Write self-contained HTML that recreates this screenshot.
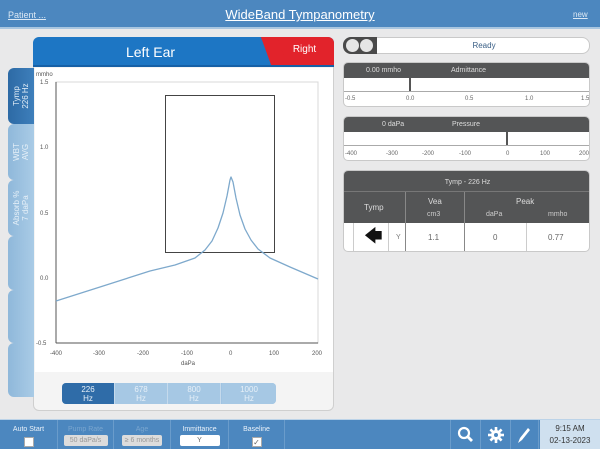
<!DOCTYPE html>
<html><head><meta charset="utf-8"><style>
*{margin:0;padding:0;box-sizing:border-box}
body{width:600px;height:449px;overflow:hidden;background:#e9e9ea;font-family:"Liberation Sans",sans-serif;position:relative}
.a{position:absolute}
.hdr{left:0;top:0;width:600px;height:29px;background:#4c87bf;border-bottom:2px solid #a9c6e0}
.tab{left:8px;width:26px;border-radius:6px 0 0 6px;background:linear-gradient(90deg,#8fb8da,#a9cbe6);color:#e6f0f8;font-size:8px}
.tab span{position:absolute;left:50%;top:50%;transform:translate(-50%,-50%) rotate(-90deg);white-space:nowrap;text-align:center;line-height:9px}
.box{background:#fff;border:1px solid #c9c9c9;border-radius:5px}
.dk{background:#545556;color:#ddd;font-size:7px}
.sm{font-size:6px;color:#666}
.fb{top:383px;height:21px;width:53px;color:#e7f0f8;font-size:8px;text-align:center;line-height:9px;padding-top:2px;border-right:1px solid #c5daec}
.bb{top:420px;height:29px;border-right:1px solid #6a9ccb;color:#eaf2fa;font-size:7px;text-align:center}
.btn{background:#dcdcdc;border-radius:2px;color:#999;font-size:7px;height:11px;line-height:11px;margin:6px auto 0}
</style></head><body>
<div class="a hdr"></div>
<div class="a" style="left:8px;top:10px;color:#dbe8f4;font-size:9px;text-decoration:underline">Patient ...</div>
<div class="a" style="left:0;width:600px;top:7px;text-align:center;color:#fff;font-size:13px;text-decoration:underline">WideBand Tympanometry</div>
<div class="a" style="left:573px;top:10px;color:#dbe8f4;font-size:8px;text-decoration:underline">new</div>

<div class="a" style="left:33px;top:37px;width:301px;height:374px;background:#f4f4f4;border:1px solid #cfcfcf;border-radius:6px"></div>
<div class="a" style="left:33px;top:37px;width:301px;height:30px;background:#1d76c4;border-radius:6px 6px 0 0;border-bottom:2px solid #1660a6"></div>
<div class="a" style="left:33px;top:44px;width:235px;text-align:center;color:#fff;font-size:14px">Left Ear</div>
<div class="a" style="left:274px;top:37px;width:60px;height:28px;background:#e2232b;border-radius:0 6px 0 0"></div>
<div class="a" style="left:266px;top:37px;width:16px;height:28px;background:#e2232b;transform:skewX(20deg)"></div>
<div class="a" style="left:282px;top:44px;width:45px;text-align:center;color:#fff;font-size:10px">Right</div>

<div class="a tab" style="top:68px;height:56px;background:linear-gradient(90deg,#2d6aa5,#3e7fbb)"><span>Tymp<br>226 Hz</span></div>
<div class="a tab" style="top:124px;height:56px"><span>WBT<br>AVG</span></div>
<div class="a tab" style="top:180px;height:56px"><span>Absorb %<br>7 daPa</span></div>
<div class="a tab" style="top:236px;height:54px"></div>
<div class="a tab" style="top:290px;height:53px"></div>
<div class="a tab" style="top:343px;height:54px"></div>

<svg class="a" style="left:0;top:0" width="600" height="449">
<rect x="35" y="68" width="298" height="304" fill="#fff"/>
<g font-family="Liberation Sans" font-size="6" fill="#555">
<text x="36" y="76">mmho</text>
<text x="40" y="84">1.5</text><text x="40" y="149">1.0</text><text x="40" y="215">0.5</text><text x="40" y="280">0.0</text><text x="36" y="345">-0.5</text>
<text x="50" y="355">-400</text><text x="93" y="355">-300</text><text x="137" y="355">-200</text><text x="181" y="355">-100</text><text x="229" y="355">0</text><text x="269" y="355">100</text><text x="312" y="355">200</text>
<text x="181" y="365">daPa</text>
</g>
<rect x="56" y="82" width="262" height="261" fill="none" stroke="#d8d8d8" stroke-width="1"/>
<line x1="56" y1="82" x2="56" y2="343" stroke="#555"/>
<line x1="56" y1="343" x2="318" y2="343" stroke="#555"/>
<rect x="165.5" y="95.5" width="109" height="157" fill="none" stroke="#444" stroke-width="1"/>
<path d="M56 301 L100 287 L150 271 L175 265 L195 258 L205 250 L212 241 L218 228 L223 213 L227 196 L230 180 L231 177 L233 182 L236 198 L240 215 L245 229 L251 240 L258 249 L270 258 L290 267 L318 279" fill="none" stroke="#7ea9cc" stroke-width="1.3" stroke-linejoin="round"/>
</svg>

<div class="a" style="left:62px;top:383px;width:214px;height:21px;border-radius:4px;overflow:hidden;background:#9fc3e2"></div>
<div class="a fb" style="left:62px;background:#2f6ca8;border-radius:4px 0 0 4px">226<br>Hz</div>
<div class="a fb" style="left:115px;background:#a6c8e4">678<br>Hz</div>
<div class="a fb" style="left:168px;background:#a6c8e4">800<br>Hz</div>
<div class="a fb" style="left:222px;width:54px;background:#a6c8e4;border:0;border-radius:0 4px 4px 0">1000<br>Hz</div>

<div class="a box" style="left:343px;top:37px;width:247px;height:17px;border-radius:8px"></div>
<div class="a" style="left:343px;top:37px;width:34px;height:17px;background:#4a4a4a;border-radius:8px 0 0 8px"></div>
<div class="a" style="left:346px;top:39px;width:13px;height:13px;border-radius:50%;background:#e5e5e5"></div>
<div class="a" style="left:360px;top:39px;width:13px;height:13px;border-radius:50%;background:#e5e5e5"></div>
<div class="a" style="left:378px;top:41px;width:212px;text-align:center;font-size:8px;color:#3a5f86">Ready</div>

<div class="a box" style="left:343px;top:62px;width:247px;height:45px;overflow:hidden">
 <div class="a dk" style="left:0;top:0;width:247px;height:15px"><span class="a" style="left:22px;top:4px">0.00 mmho</span><span class="a" style="left:107px;top:4px">Admittance</span></div>
 <div class="a" style="left:0;top:28px;width:247px;border-top:1px solid #aaa"></div>
 <div class="a" style="left:65px;top:15px;width:2px;height:13px;background:#555"></div>
 <div class="a sm" style="left:1px;top:33px">-0.5</div><div class="a sm" style="left:62px;top:33px">0.0</div><div class="a sm" style="left:121px;top:33px">0.5</div><div class="a sm" style="left:181px;top:33px">1.0</div><div class="a sm" style="left:237px;top:33px">1.5</div>
</div>
<div class="a box" style="left:343px;top:116px;width:247px;height:45px;overflow:hidden">
 <div class="a dk" style="left:0;top:0;width:247px;height:15px"><span class="a" style="left:38px;top:4px">0 daPa</span><span class="a" style="left:108px;top:4px">Pressure</span></div>
 <div class="a" style="left:0;top:28px;width:247px;border-top:1px solid #aaa"></div>
 <div class="a" style="left:162px;top:15px;width:2px;height:13px;background:#555"></div>
 <div class="a sm" style="left:1px;top:34px">-400</div><div class="a sm" style="left:42px;top:34px">-300</div><div class="a sm" style="left:78px;top:34px">-200</div><div class="a sm" style="left:115px;top:34px">-100</div><div class="a sm" style="left:162px;top:34px">0</div><div class="a sm" style="left:196px;top:34px">100</div><div class="a sm" style="left:235px;top:34px">200</div>
</div>
<div class="a box" style="left:343px;top:170px;width:247px;height:82px;overflow:hidden">
 <div class="a dk" style="left:0;top:0;width:247px;height:52px"></div>
 <div class="a" style="left:0;top:20px;width:247px;border-top:1px solid #777"></div>
 <div class="a" style="left:0;top:3px;width:247px;text-align:center;color:#ddd;font-size:7px;padding-top:5px">Tymp - 226 Hz</div>
 <div class="a" style="left:20px;top:32px;color:#ddd;font-size:8px">Tymp</div>
 <div class="a" style="left:61px;top:21px;width:1px;height:61px;background:#888"></div>
 <div class="a" style="left:120px;top:21px;width:1px;height:61px;background:#888"></div>
 <div class="a" style="left:182px;top:52px;width:1px;height:30px;background:#ccc"></div>
 <div class="a" style="left:9px;top:52px;width:1px;height:30px;background:#ccc"></div>
 <div class="a" style="left:44px;top:52px;width:1px;height:30px;background:#ccc"></div>
 <div class="a" style="left:84px;top:26px;color:#ddd;font-size:8px">Vea</div>
 <div class="a" style="left:83px;top:40px;color:#ccc;font-size:7px">cm3</div>
 <div class="a" style="left:172px;top:26px;color:#ddd;font-size:8px">Peak</div>
 <div class="a" style="left:142px;top:40px;color:#ccc;font-size:7px">daPa</div>
 <div class="a" style="left:204px;top:40px;color:#ccc;font-size:7px">mmho</div>
 <div class="a" style="left:20px;top:55px;font-size:18px;line-height:20px;color:#111">&#129092;</div>
 <div class="a" style="left:52px;top:63px;font-size:7px;color:#777">Y</div>
 <div class="a" style="left:84px;top:62px;font-size:8px;color:#666">1.1</div>
 <div class="a" style="left:149px;top:62px;font-size:8px;color:#666">0</div>
 <div class="a" style="left:204px;top:62px;font-size:8px;color:#666">0.77</div>
</div>

<div class="a" style="left:0;top:419px;width:600px;height:30px;background:#4c87bf;border-top:1px solid #bcd3e8"></div>
<div class="a bb" style="left:0;width:58px"><div style="margin-top:6px">Auto Start</div><div style="width:10px;height:10px;background:#fff;margin:4px auto 0;border:1px solid #aaa"></div></div>
<div class="a bb" style="left:58px;width:56px"><div style="margin-top:6px;color:#7aa6cf">Pump Rate</div><div class="btn" style="width:44px;margin-top:2px">50 daPa/s</div></div>
<div class="a bb" style="left:114px;width:57px"><div style="margin-top:6px;color:#7aa6cf">Age</div><div class="btn" style="width:40px;margin-top:2px">≥ 6 months</div></div>
<div class="a bb" style="left:171px;width:58px"><div style="margin-top:6px">Immittance</div><div class="btn" style="width:40px;margin-top:2px;background:#fff;color:#666">Y</div></div>
<div class="a bb" style="left:229px;width:56px"><div style="margin-top:6px">Baseline</div><div style="width:10px;height:10px;background:#fff;margin:4px auto 0;border:1px solid #aaa;font-size:8px;line-height:9px;color:#666">✓</div></div>
<div class="a bb" style="left:450px;width:31px;border-left:1px solid #6a9ccb"></div>
<div class="a bb" style="left:481px;width:30px"></div>
<div class="a bb" style="left:511px;width:28px"></div>
<svg class="a" style="left:450px;top:420px" width="90" height="29">
<circle cx="14" cy="13" r="5" fill="none" stroke="#fff" stroke-width="2.2"/><line x1="18" y1="17" x2="22" y2="21" stroke="#fff" stroke-width="2.8"/>
<g transform="translate(46 15)" fill="#fff"><circle r="5"/><g stroke="#fff" stroke-width="2.6"><line x1="0" y1="-8" x2="0" y2="8"/><line x1="-8" y1="0" x2="8" y2="0"/><line x1="-5.6" y1="-5.6" x2="5.6" y2="5.6"/><line x1="-5.6" y1="5.6" x2="5.6" y2="-5.6"/></g><circle r="2" fill="#4c87bf"/></g>
<path d="M68 23 L70 18 L78 8 L80 10 L72 20 Z" fill="#fff"/>
</svg>
<div class="a" style="left:540px;top:420px;width:60px;height:29px;background:#cfe0ef;color:#333;font-size:8px;text-align:center;line-height:12px;padding-top:3px">9:15 AM<br>02-13-2023</div>
</body></html>
